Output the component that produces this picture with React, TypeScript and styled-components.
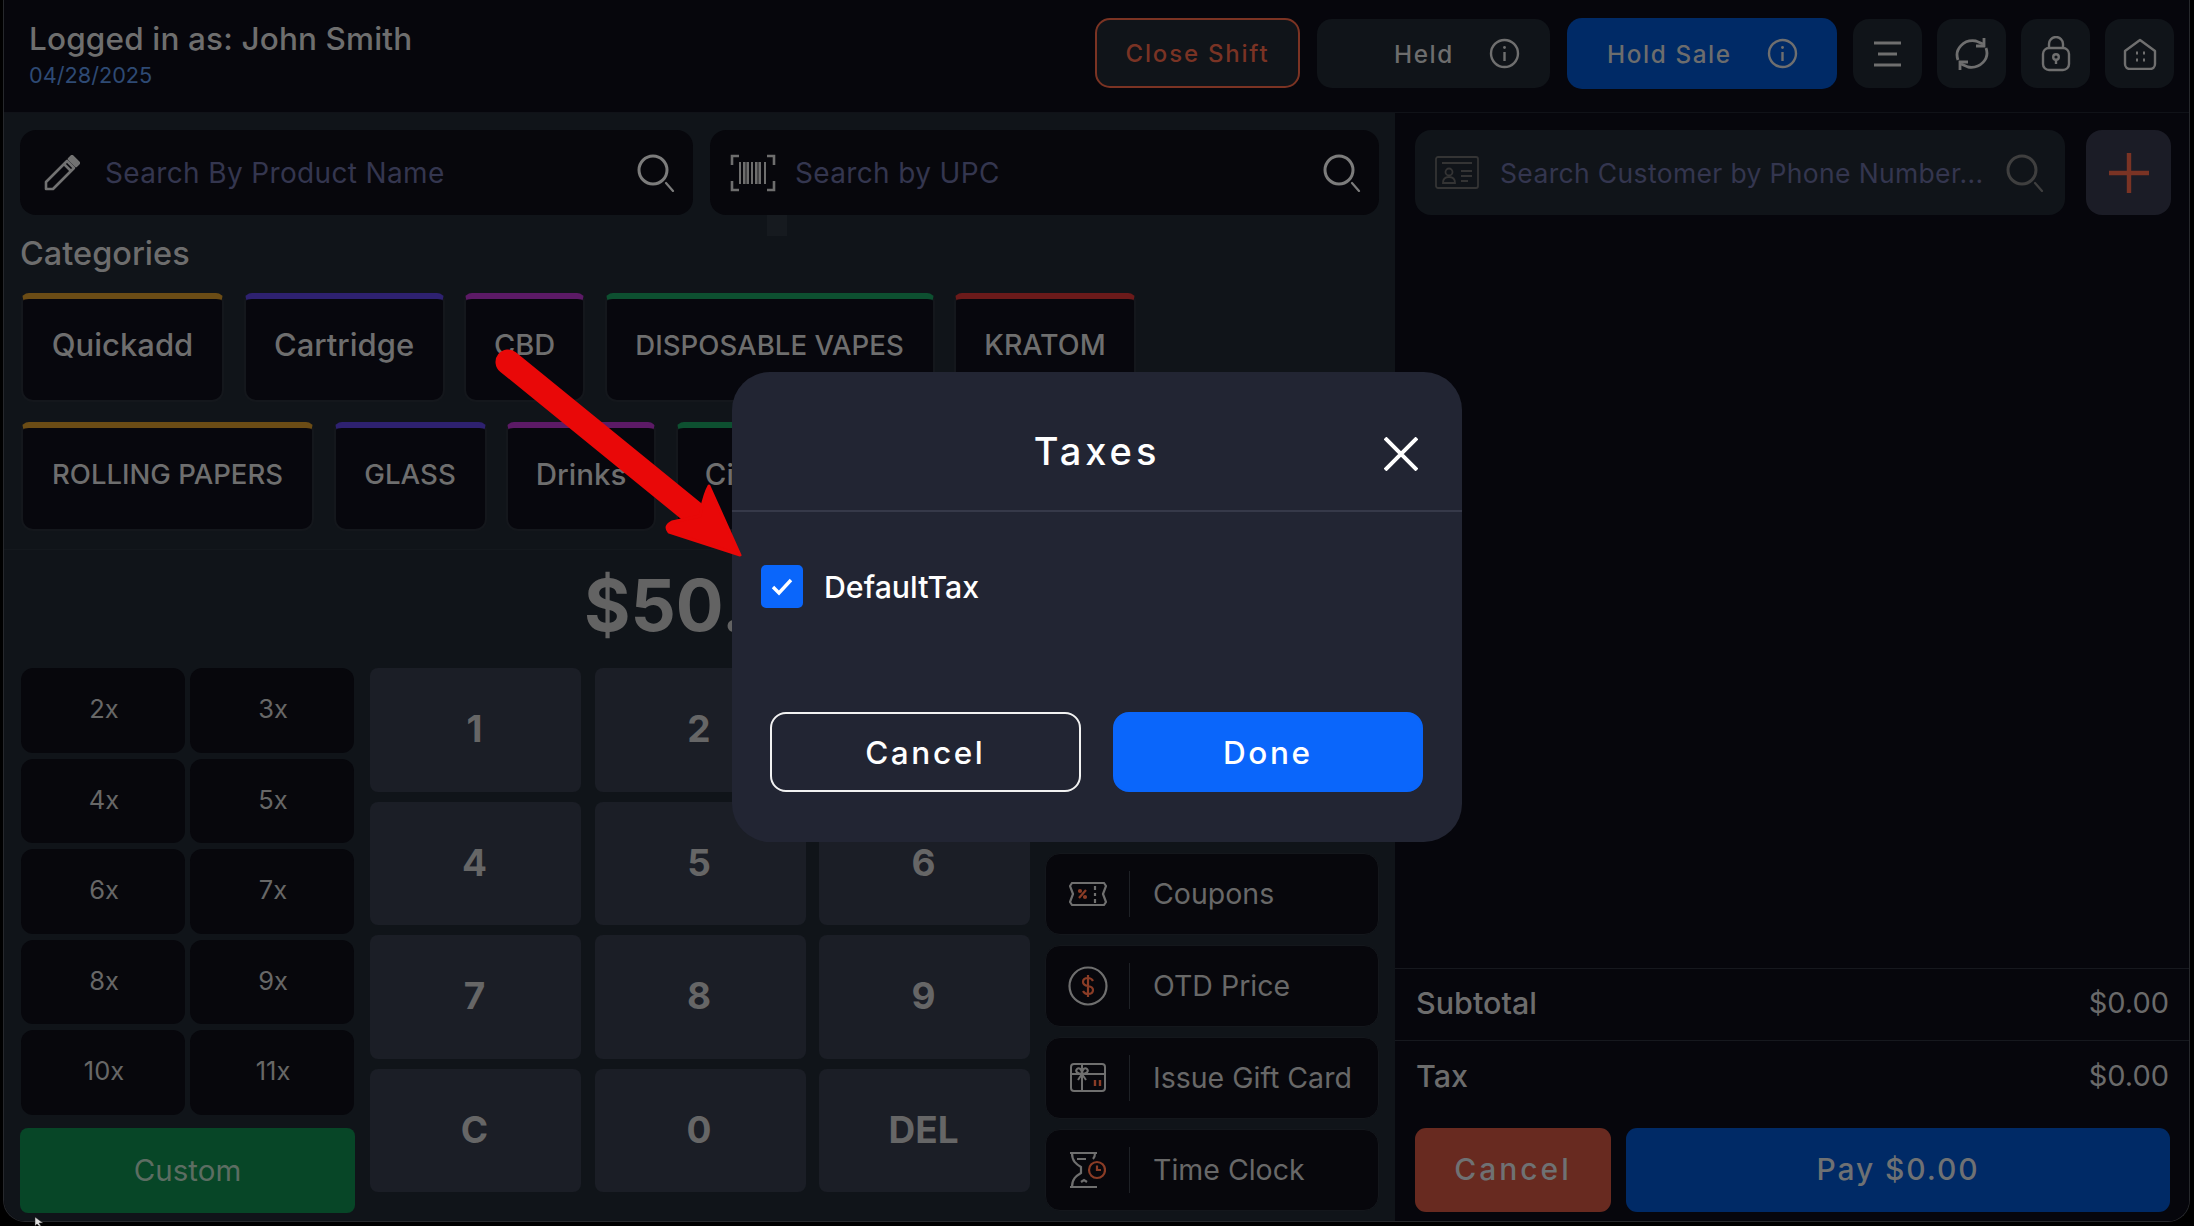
import React from "react";
import styled, { createGlobalStyle } from "styled-components";

const Global = createGlobalStyle`
  html, body { margin: 0; padding: 0; background: #000; }
  body { font-family: Inter, "Noto Sans", "Liberation Sans", sans-serif; overflow: hidden; }
  * { box-sizing: border-box; }
`;

const Page = styled.div`
  position: relative;
  width: 2194px;
  height: 1226px;
  padding: 0 4px 4px 3px;
  background: #000;
`;
const Frame = styled.div`
  width: 100%;
  height: 100%;
  display: flex;
  flex-direction: column;
  border: 1px solid #26282c;
  border-top: none;
  border-radius: 0 0 22px 22px;
  overflow: hidden;
  background: #06060c;
  color: #6c6c6c;
`;
const Header = styled.header`
  flex: 0 0 113px;
  display: flex;
  align-items: flex-start;
  justify-content: space-between;
  padding: 19px 15px 0 25px;
  border-bottom: 1px solid #101218;
`;
const Who = styled.div`
  display: flex;
  flex-direction: column;
`;
const UserName = styled.div`
  font-size: 31.5px;
  line-height: 40px;
  font-weight: 500;
  color: #6e6e6e;
  letter-spacing: 0.15px;
`;
const DateText = styled.div`
  font-size: 21.7px;
  line-height: 33px;
  color: #2e4a74;
`;
const HeaderActions = styled.div`
  display: flex;
  align-items: flex-start;
  margin-top: -1px;
`;
const CloseShift = styled.div`
  width: 205px;
  height: 70px;
  margin-right: 17px;
  display: flex;
  align-items: center;
  justify-content: center;
  border: 2px solid #7b3323;
  border-radius: 15px;
  background: #101419;
  color: #7a3324;
  font-size: 24px;
  font-weight: 500;
  letter-spacing: 1.8px;
`;
const InfoButton = styled.div<{ $w: number; $pl: number; $gap: number; $blue?: boolean; $mr: number }>`
  width: ${(p) => p.$w}px;
  height: ${(p) => (p.$blue ? 71 : 69)}px;
  margin-top: ${(p) => (p.$blue ? 0 : 1)}px;
  margin-right: ${(p) => p.$mr}px;
  padding-left: ${(p) => p.$pl}px;
  display: flex;
  align-items: center;
  gap: ${(p) => p.$gap}px;
  border-radius: 15px;
  background: ${(p) => (p.$blue ? "#002a66" : "#101419")};
  color: #6d6d6d;
  font-size: 24.3px;
  font-weight: 500;
  letter-spacing: 1.6px;
`;
const IconButton = styled.div`
  width: 69px;
  height: 69px;
  margin-top: 1px;
  margin-left: 15px;
  display: flex;
  align-items: center;
  justify-content: center;
  border-radius: 16px;
  background: #101419;
`;
const Main = styled.div`
  flex: 1;
  min-height: 0;
  display: grid;
  grid-template-columns: 1391px minmax(0, 1fr);
`;
const LeftPanel = styled.section`
  position: relative;
  background: #101419;
  padding: 17px 16px 0 16px;
`;
const SearchRow = styled.div`
  display: flex;
  gap: 17px;
`;
const SearchBox = styled.div<{ $dark?: boolean }>`
  flex: 1;
  min-width: 0;
  height: 85px;
  display: flex;
  align-items: center;
  padding: 0 18px 0 24px;
  gap: 25px;
  border-radius: 16px;
  background: ${(p) => (p.$dark ? "#07070c" : "#101419")};
`;
const UpcBox = styled(SearchBox)`
  padding-left: 20px;
  gap: 19px;
`;
const CustomerBox = styled(SearchBox)`
  padding: 0 21px 0 20px;
  gap: 21px;
`;
const Placeholder = styled.div<{ $fs?: number }>`
  flex: 1;
  min-width: 0;
  font-size: ${(p) => p.$fs ?? 28}px;
  color: #34364f;
  white-space: nowrap;
  letter-spacing: 0.35px;
`;
const Stub = styled.div`
  position: absolute;
  left: 763px;
  top: 102px;
  width: 20px;
  height: 21px;
  background: #161a1f;
`;
const SectionTitle = styled.h2`
  margin: 19px 0 0 0;
  height: 40px;
  font-size: 32.5px;
  line-height: 40px;
  font-weight: 500;
  color: #6d6d6d;
`;
const TabRow = styled.div<{ $mt: number }>`
  display: flex;
  gap: 19.5px;
  margin: ${(p) => p.$mt}px 0 0 1px;
`;
const Tab = styled.div<{ $w: number; $c: string; $fs: number }>`
  flex: 0 0 ${(p) => p.$w}px;
  height: 109px;
  display: flex;
  align-items: center;
  justify-content: center;
  padding-bottom: 10px;
  border: 2px solid #14171c;
  border-top: 6px solid ${(p) => p.$c};
  border-radius: 8px 8px 12px 12px;
  background: #07070d;
  font-size: ${(p) => p.$fs}px;
  font-weight: 500;
  color: #6e6e6e;
  white-space: nowrap;
  overflow: hidden;
`;
const Rule = styled.div`
  height: 1px;
  margin: 18px -16px 0 -16px;
  background: #14181d;
`;
const Price = styled.div`
  height: 80px;
  margin-top: 15px;
  padding-left: 24px;
  display: flex;
  align-items: center;
  justify-content: center;
  font-size: 71px;
  font-weight: 700;
  color: #636363;
`;
const Pad = styled.div`
  margin-top: 23px;
  display: grid;
  grid-template-columns: 335px 660px 334px;
  column-gap: 15px;
`;
const MultiColumn = styled.div`
  display: flex;
  flex-direction: column;
`;
const MultiGrid = styled.div`
  display: grid;
  grid-template-columns: 164px 164px;
  grid-auto-rows: 84.5px;
  gap: 6px 5px;
  padding-left: 1px;
`;
const Multi = styled.div`
  display: flex;
  align-items: center;
  justify-content: center;
  padding: 0 0 3px 2px;
  border-radius: 12px;
  background: #07070c;
  font-size: 25.5px;
  color: #676767;
`;
const Custom = styled.div`
  height: 85px;
  margin-top: 13px;
  display: flex;
  align-items: center;
  justify-content: center;
  border-radius: 8px;
  background: #074627;
  color: #5c6d62;
  font-size: 29.5px;
`;
const NumGrid = styled.div`
  display: grid;
  grid-template-columns: repeat(3, 211px);
  grid-auto-rows: 123.5px;
  gap: 10px 13.5px;
`;
const NumKey = styled.div`
  display: flex;
  align-items: center;
  justify-content: center;
  padding: 0 2px 2px 0;
  border-radius: 8px;
  background: #1b1e26;
  color: #666;
  font-size: 37px;
  font-weight: 700;
`;
const SideColumn = styled.div`
  display: flex;
  flex-direction: column;
  justify-content: flex-end;
  gap: 10.5px;
  padding-bottom: 2px;
`;
const SideButton = styled.div`
  height: 81.5px;
  display: flex;
  align-items: center;
  border: 1px solid #14171c;
  border-radius: 15px;
  background: #07070c;
  font-size: 28.5px;
  color: #686868;
`;
const SideIcon = styled.div`
  width: 84px;
  height: 46px;
  flex: none;
  display: flex;
  align-items: center;
  justify-content: center;
  border-right: 1px solid #1e2126;
  margin-right: 23px;
`;
const RightPanel = styled.section`
  display: flex;
  flex-direction: column;
  min-width: 0;
  background: #06060c;
  padding-top: 17px;
`;
const CustomerRow = styled.div`
  display: flex;
  gap: 21px;
  padding: 0 18px 0 20px;
`;
const PlusButton = styled.div`
  flex: 0 0 85px;
  height: 85px;
  display: flex;
  align-items: center;
  justify-content: center;
  border-radius: 16px;
  background: #1b1c26;
`;
const Summary = styled.div`
  margin-top: auto;
`;
const SumRow = styled.div<{ $h: number }>`
  height: ${(p) => p.$h}px;
  display: flex;
  align-items: center;
  justify-content: space-between;
  padding: 0 20px 4px 21px;
  border-top: 1.5px solid #16181e;
  font-size: 30.5px;
  font-weight: 500;
  color: #6c6c6c;
`;
const SumValue = styled.span`
  font-weight: 400;
  font-size: 29px;
  color: #6a6a6a;
`;
const PayRow = styled.div`
  display: flex;
  gap: 15px;
  padding: 14px 19px 9px 20px;
`;
const PayButton = styled.div<{ $bg: string; $w?: number; $ls: number }>`
  ${(p) => (p.$w ? `flex: 0 0 ${p.$w}px;` : "flex: 1;")}
  height: 84px;
  display: flex;
  align-items: center;
  justify-content: center;
  padding-bottom: 2px;
  border-radius: 11px;
  background: ${(p) => p.$bg};
  color: #6f7173;
  font-size: 30px;
  font-weight: 500;
  letter-spacing: ${(p) => p.$ls}px;
`;
const Overlay = styled.div`
  position: absolute;
  inset: 0;
  display: flex;
  align-items: center;
  justify-content: center;
  padding-bottom: 12px;
`;
const Modal = styled.div`
  width: 730px;
  height: 470px;
  display: flex;
  flex-direction: column;
  border-radius: 38px;
  background: #222533;
  color: #fff;
`;
const ModalHead = styled.div`
  flex: 0 0 140px;
  display: grid;
  grid-template-columns: 1fr auto 1fr;
  align-items: center;
  padding: 22px 44px 0 44px;
  border-bottom: 2px solid #363949;
`;
const ModalTitle = styled.div`
  font-size: 38px;
  font-weight: 500;
  letter-spacing: 4px;
  padding-bottom: 2px;
`;
const CloseIcon = styled.div`
  justify-self: end;
  display: flex;
  padding-top: 4px;
`;
const ModalBody = styled.label`
  display: flex;
  align-items: center;
  gap: 21px;
  margin: 53px 0 0 29px;
  font-size: 30.3px;
  font-weight: 500;
`;
const Check = styled.span`
  width: 42px;
  height: 43px;
  display: flex;
  align-items: center;
  justify-content: center;
  border-radius: 5px;
  background: #0a66fb;
`;
const ModalFoot = styled.div`
  margin-top: 104px;
  display: flex;
  gap: 32px;
  padding: 0 39px 0 38px;
`;
const ModalButton = styled.div<{ $primary?: boolean }>`
  flex: 1;
  height: 80px;
  display: flex;
  align-items: center;
  justify-content: center;
  border-radius: 16px;
  border: 2px solid ${(p) => (p.$primary ? "#0a66fb" : "#f2f2f2")};
  background: ${(p) => (p.$primary ? "#0a66fb" : "transparent")};
  font-size: 31.5px;
  font-weight: 500;
  letter-spacing: 2.6px;
`;
const Arrow = styled.svg`
  position: absolute;
  left: 0;
  top: 0;
  pointer-events: none;
`;
const Cursor = styled.svg`
  position: absolute;
  left: 34px;
  top: 1217px;
`;

const G = "#6f6f6f";
const O = "#8a3c26";

const Info = () => (
  <svg width="31" height="31" viewBox="0 0 31 31" fill="none" stroke={G} strokeWidth="2.4">
    <circle cx="15.5" cy="15.5" r="13.5" />
    <path d="M15.5 14v9" />
    <circle cx="15.5" cy="9.5" r="1.4" fill={G} stroke="none" />
  </svg>
);
const Search = ({ c = "#7c7c7c" }: { c?: string }) => (
  <svg width="38" height="38" viewBox="0 0 38 38" fill="none" stroke={c} strokeWidth="3">
    <circle cx="16" cy="16" r="14" />
    <path d="M29 29l7 8" strokeWidth="2.2" strokeLinecap="round" />
  </svg>
);
const Pencil = () => (
  <svg width="36" height="36" viewBox="0 0 36 36" fill="none" stroke="#727272" strokeWidth="2.6" strokeLinejoin="round">
    <path d="M2 27L23 6l7 7L9 34H2z" />
    <path d="M25 4l3-3 7 7-3 3z" fill="#727272" />
    <path d="M20 9l7 7" />
  </svg>
);
const Barcode = () => (
  <svg width="46" height="38" viewBox="0 0 46 38" fill="none" stroke="#6e6e6e">
    <path d="M9 2H2v9M37 2h7v9M9 36H2v-9M37 36h7v-9" strokeWidth="2.6" />
    <path d="M10 8v22M14 8v22M18 8v22M22 8v22M26 8v22M30 8v22M35 8v22" strokeWidth="2" />
    <path d="M16 8v22M28 8v22" strokeWidth="1.2" />
  </svg>
);
const MenuIcon = () => (
  <svg width="27" height="26" viewBox="0 0 27 26" fill="none" stroke={G} strokeWidth="3">
    <path d="M0 2h27M4 13h19M0 24h27" />
  </svg>
);
const RefreshIcon = () => (
  <svg width="34" height="32" viewBox="0 0 34 32" fill="none" stroke={G} strokeWidth="2.8">
    <path d="M3 22C-1 11 9 1 21 3l7 3" />
    <path d="M29 0v8h-8" />
    <path d="M31 10c4 11-6 21-18 19l-7-3" />
    <path d="M5 32v-8h8" />
  </svg>
);
const LockIcon = () => (
  <svg width="30" height="36" viewBox="0 0 30 36" fill="none" stroke={G} strokeWidth="2.4">
    <rect x="2" y="12" width="26" height="22" rx="6" />
    <path d="M8 12V8a7 7 0 0 1 14 0v4" />
    <circle cx="15" cy="21" r="2.8" />
    <path d="M15 24v4" />
  </svg>
);
const HomeIcon = () => (
  <svg width="34" height="32" viewBox="0 0 34 32" fill="none" stroke={G} strokeWidth="2.4">
    <path d="M2 13L17 2l15 11v13a5 5 0 0 1-5 5H7a5 5 0 0 1-5-5z" strokeLinejoin="round" />
    <path d="M13 15h2M20 15h2M13 22h2M20 22h2" strokeWidth="3" />
  </svg>
);
const IdIcon = () => (
  <svg width="44" height="33" viewBox="0 0 44 33" fill="none" stroke="#343434" strokeWidth="1.8">
    <rect x="1" y="1" width="42" height="31" rx="2" />
    <path d="M7 7h30M26 15h11M26 20h11M26 25h7" />
    <circle cx="14" cy="16" r="3.5" />
    <path d="M8 27c0-5 3-6 6-6s6 1 6 6z" />
  </svg>
);
const Plus = () => (
  <svg width="40" height="40" viewBox="0 0 40 40" fill="none" stroke="#7a3324" strokeWidth="4.4">
    <path d="M20 0v40M0 20h40" />
  </svg>
);
const Coupon = () => (
  <svg width="38" height="24" viewBox="0 0 38 24" fill="none" stroke={G} strokeWidth="2.2">
    <path d="M3 1h32l2 3-3 8 3 8-2 3H3l-2-3 3-8-3-8z" strokeLinejoin="round" />
    <path d="M26 4v4M26 11v3M26 17v4" />
    <path d="M10 16l7-8" stroke={O} />
    <circle cx="11" cy="9" r="1" stroke={O} />
    <circle cx="16" cy="15" r="1" stroke={O} />
  </svg>
);
const Dollar = () => (
  <svg width="40" height="40" viewBox="0 0 40 40" fill="none" strokeWidth="2.2">
    <circle cx="20" cy="20" r="18.5" stroke={G} />
    <path d="M25 15c-1-2-3-3-5-3-3 0-5 1.600-5 4s2 3.500 5 4 5 1.600 5 4-2 4-5 4c-2 0-4-1-5-3M20 9v22" stroke={O} />
  </svg>
);
const GiftCard = () => (
  <svg width="36" height="29" viewBox="0 0 36 29" fill="none" stroke={G} strokeWidth="2">
    <rect x="1" y="1" width="34" height="27" rx="3" />
    <path d="M1 11h34M12 1v27" />
    <path d="M12 11c-5 0-7-3-5-5s5 0 5 5c0-5 3-7 5-5s0 5-5 5l-4 6M12 11l4 6" />
    <path d="M25 17v6M30 17v6" stroke={O} strokeWidth="2.4" />
  </svg>
);
const TimeClock = () => (
  <svg width="36" height="36" viewBox="0 0 36 36" fill="none" stroke={G} strokeWidth="2.2">
    <path d="M0 1h27M0 35h27M2 1c0 8 4 11 9 14v6c-5 3-9 6-9 14M25 1c0 2 0 4-2 6" />
    <path d="M7 7h9M11 30l3-2 3 2" />
    <circle cx="27" cy="18" r="8" stroke={O} />
    <path d="M27 13.500V18h4" stroke={O} />
  </svg>
);

const row1 = [
  ["Quickadd", 203, "#6b4c15", 31],
  ["Cartridge", 201, "#2e2170", 31],
  ["CBD", 121, "#5c1a66", 29],
  ["DISPOSABLE VAPES", 330, "#0d5030", 27.6],
  ["KRATOM", 182, "#6b1a1a", 28.5],
] as const;
const row2 = [
  ["ROLLING PAPERS", 293, "#6b4c15", 27.5],
  ["GLASS", 153, "#2e2170", 27.7],
  ["Drinks", 150, "#5c1a66", 29.5],
  ["Cigars", 150, "#0d5030", 29.5],
] as const;
const multis = ["2x", "3x", "4x", "5x", "6x", "7x", "8x", "9x", "10x", "11x"];
const keys = ["1", "2", "3", "4", "5", "6", "7", "8", "9", "C", "0", "DEL"];

export default function App() {
  return (
    <Page>
      <Global />
      <Frame>
        <Header>
          <Who>
            <UserName>Logged in as: John Smith</UserName>
            <DateText>04/28/2025</DateText>
          </Who>
          <HeaderActions>
            <CloseShift>Close Shift</CloseShift>
            <InfoButton $w={233} $pl={77} $gap={35} $mr={17}>Held<Info /></InfoButton>
            <InfoButton $w={270} $pl={40} $gap={35} $blue $mr={1}>Hold Sale<Info /></InfoButton>
            <IconButton><MenuIcon /></IconButton>
            <IconButton><RefreshIcon /></IconButton>
            <IconButton><LockIcon /></IconButton>
            <IconButton><HomeIcon /></IconButton>
          </HeaderActions>
        </Header>
        <Main>
          <LeftPanel>
            <SearchRow>
              <SearchBox $dark><Pencil /><Placeholder>Search By Product Name</Placeholder><Search /></SearchBox>
              <UpcBox $dark><Barcode /><Placeholder>Search by UPC</Placeholder><Search /></UpcBox>
            </SearchRow>
            <Stub />
            <SectionTitle>Categories</SectionTitle>
            <TabRow $mt={19}>
              {row1.map(([t, w, c, f]) => <Tab key={t} $w={w} $c={c} $fs={f}>{t}</Tab>)}
            </TabRow>
            <TabRow $mt={20}>
              {row2.map(([t, w, c, f]) => <Tab key={t} $w={w} $c={c} $fs={f}>{t}</Tab>)}
            </TabRow>
            <Rule />
            <Price>$50.00</Price>
            <Pad>
              <MultiColumn>
                <MultiGrid>{multis.map((m) => <Multi key={m}>{m}</Multi>)}</MultiGrid>
                <Custom>Custom</Custom>
              </MultiColumn>
              <NumGrid>{keys.map((k) => <NumKey key={k}>{k}</NumKey>)}</NumGrid>
              <SideColumn>
                <SideButton><SideIcon><Coupon /></SideIcon>Coupons</SideButton>
                <SideButton><SideIcon><Dollar /></SideIcon>OTD Price</SideButton>
                <SideButton><SideIcon><GiftCard /></SideIcon>Issue Gift Card</SideButton>
                <SideButton><SideIcon><TimeClock /></SideIcon>Time Clock</SideButton>
              </SideColumn>
            </Pad>
          </LeftPanel>
          <RightPanel>
            <CustomerRow>
              <CustomerBox>
                <IdIcon />
                <Placeholder $fs={26.5}>Search Customer by Phone Number...</Placeholder>
                <Search c="#3f3f3f" />
              </CustomerBox>
              <PlusButton><Plus /></PlusButton>
            </CustomerRow>
            <Summary>
              <SumRow $h={72}>Subtotal<SumValue>$0.00</SumValue></SumRow>
              <SumRow $h={74}>Tax<SumValue>$0.00</SumValue></SumRow>
              <PayRow>
                <PayButton $bg="#682a20" $w={196} $ls={3}>Cancel</PayButton>
                <PayButton $bg="#002a66" $ls={1.9}>Pay $0.00</PayButton>
              </PayRow>
            </Summary>
          </RightPanel>
        </Main>
      </Frame>
      <Overlay>
        <Modal>
          <ModalHead>
            <span />
            <ModalTitle>Taxes</ModalTitle>
            <CloseIcon>
              <svg width="34" height="34" viewBox="0 0 34 34" stroke="#fff" strokeWidth="4">
                <path d="M1 1l32 32M33 1L1 33" />
              </svg>
            </CloseIcon>
          </ModalHead>
          <ModalBody>
            <Check>
              <svg width="22" height="18" viewBox="0 0 22 18" fill="none" stroke="#fff" strokeWidth="3.4">
                <path d="M2 9l6 6L20 2" />
              </svg>
            </Check>
            DefaultTax
          </ModalBody>
          <ModalFoot>
            <ModalButton>Cancel</ModalButton>
            <ModalButton $primary>Done</ModalButton>
          </ModalFoot>
        </Modal>
      </Overlay>
      <Arrow width="2194" height="1226" viewBox="0 0 2194 1226">
        <path d="M508 362L712 528" stroke="#e90808" strokeWidth="25" strokeLinecap="round" />
        <path d="M709 486L740 555L669 532Q664 526 672 522L700 516Q704 495 709 486Z" fill="#e90808" stroke="#e90808" strokeWidth="3" strokeLinejoin="round" />
      </Arrow>
      <Cursor width="10" height="9" viewBox="0 0 10 9">
        <path d="M1 0v9l2-2 2 2h2L5 6h4z" fill="#ddd" stroke="#222" strokeWidth="0.5" />
      </Cursor>
    </Page>
  );
}
